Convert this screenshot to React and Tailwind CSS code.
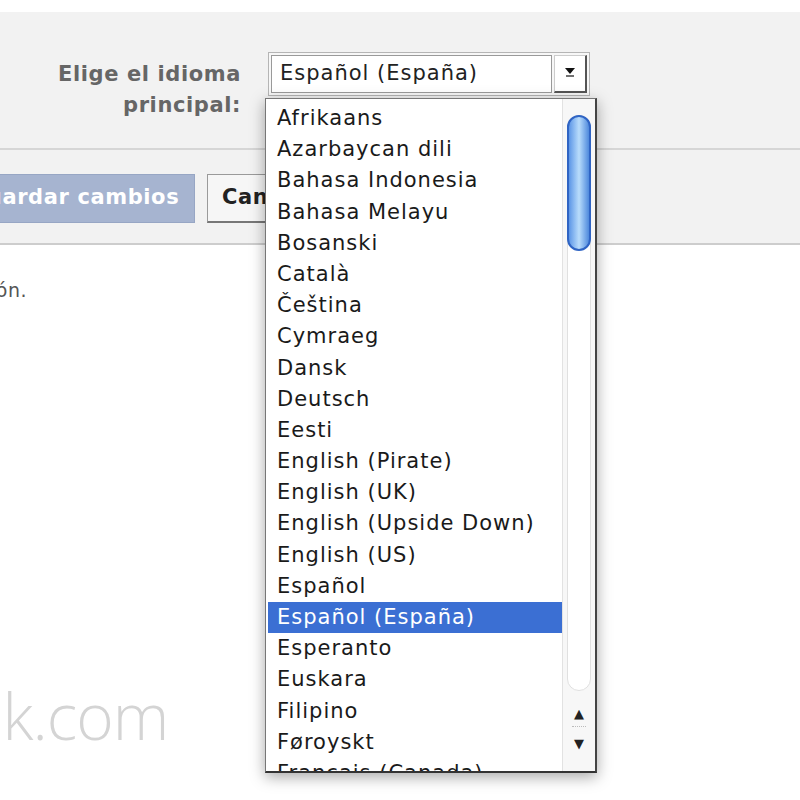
import React from 'react';

const languages = [
    'Afrikaans',
    'Azarbaycan dili',
    'Bahasa Indonesia',
    'Bahasa Melayu',
    'Bosanski',
    'Català',
    'Čeština',
    'Cymraeg',
    'Dansk',
    'Deutsch',
    'Eesti',
    'English (Pirate)',
    'English (UK)',
    'English (Upside Down)',
    'English (US)',
    'Español',
    'Español (España)',
    'Esperanto',
    'Euskara',
    'Filipino',
    'Føroyskt',
    'Français (Canada)',
];

const selected = 'Español (España)';

const LanguageSettings = () => {
    return (
        <div className="relative w-[800px] h-[800px] bg-white overflow-hidden font-['DejaVu_Sans',sans-serif]">
            <div className="h-[12px] bg-white" />

            {/* Language row */}
            <div className="h-[138px] bg-[#f2f2f2] border-b-2 border-[#d6d6d6] flex">
                <div className="w-[241px] pt-[47px] text-right text-[21px] tracking-[0.6px] leading-[31px] font-bold text-[#666] whitespace-nowrap">
                    <div>Elige el idioma</div>
                    <div>principal:</div>
                </div>
                <div className="ml-[27px] mt-[40px] w-[322px] h-[44px] border border-[#b5b5b5] bg-[#f7f7f7] flex p-[2px] gap-[2px]">
                    <div className="flex-1 bg-white border border-[#9a9a9a] flex items-center pl-[8px] text-[21px] tracking-[1px] text-[#222] whitespace-nowrap">
                        {selected}
                    </div>
                    <div className="w-[33px] bg-white border-r-2 border-b-2 border-[#555] border-l border-t border-l-[#ccc] border-t-[#ccc] flex items-start justify-center pt-[11px]">
                        <svg width="12" height="10" viewBox="0 0 12 10">
                            <path d="M1 1h10L6 7z" fill="#111" />
                            <path d="M2 9h8" stroke="#111" strokeWidth="1.2" />
                        </svg>
                    </div>
                </div>
            </div>

            {/* Buttons row */}
            <div className="h-[95px] bg-[#f2f2f2] border-b-2 border-[#cdcdcd] flex items-center gap-[12px] pt-[3px]">
                <button className="ml-[-36px] h-[49px] w-[231px] bg-[#a6b4d0] border border-[#97a6c4] text-white font-bold text-[21px] tracking-[0.6px] text-left pl-[4px] whitespace-nowrap">
                    Guardar cambios
                </button>
                <button className="h-[49px] px-[14px] bg-[#f6f6f6] border border-[#9a9a9a] border-b-2 border-b-[#777] text-[#222] font-bold text-[21px] tracking-[0.6px]">
                    Cancelar
                </button>
            </div>

            {/* Page body */}
            <div className="pt-[31px] text-[19px] tracking-[0.5px] text-[#555] ml-[-10px]">ión.</div>
            <div className="mt-[379px] ml-[-34px] text-[64px] leading-none text-[#d4d4d4] font-['Open_Sans',sans-serif] font-light tracking-[-1px]">
                ok.com
            </div>

            {/* Open dropdown list */}
            <div className="absolute left-[265px] top-[98px] w-[332px] h-[675px] bg-white border border-[#777] border-r-2 border-b-2 border-r-[#444] border-b-[#333] shadow-[0_4px_14px_rgba(0,0,0,0.35)] flex overflow-hidden">
                <div className="flex-1 pt-[4px] pl-[2px]">
                    {languages.map((lang) => (
                        <div
                            key={lang}
                            className={`h-[31.2px] leading-[31.2px] pl-[9px] text-[21px] tracking-[1px] whitespace-nowrap ${
                                lang === selected ? 'bg-[#3b6fd3] text-white' : 'text-[#1a1a1a]'
                            }`}
                        >
                            {lang}
                        </div>
                    ))}
                </div>
                <div className="w-[33px] bg-[#f7f7f7] border-l border-[#e2e2e2] flex flex-col items-center pt-[16px]">
                    <div className="w-[24px] h-[576px] rounded-full bg-white border border-[#e0e0e0] relative">
                        <div className="absolute left-[-1px] top-[-1px] w-[24px] h-[136px] rounded-full border-2 border-[#2f64c4] bg-gradient-to-r from-[#5d96e6] via-[#b9dcfb] to-[#4f89dc]" />
                    </div>
                    <div className="mt-[16px] text-[13px] leading-none text-[#222]">▲</div>
                    <div className="mt-[6px] w-[14px] border-t border-dotted border-[#bbb]" />
                    <div className="mt-[10px] text-[13px] leading-none text-[#222]">▼</div>
                </div>
            </div>
        </div>
    );
};

export default LanguageSettings;
